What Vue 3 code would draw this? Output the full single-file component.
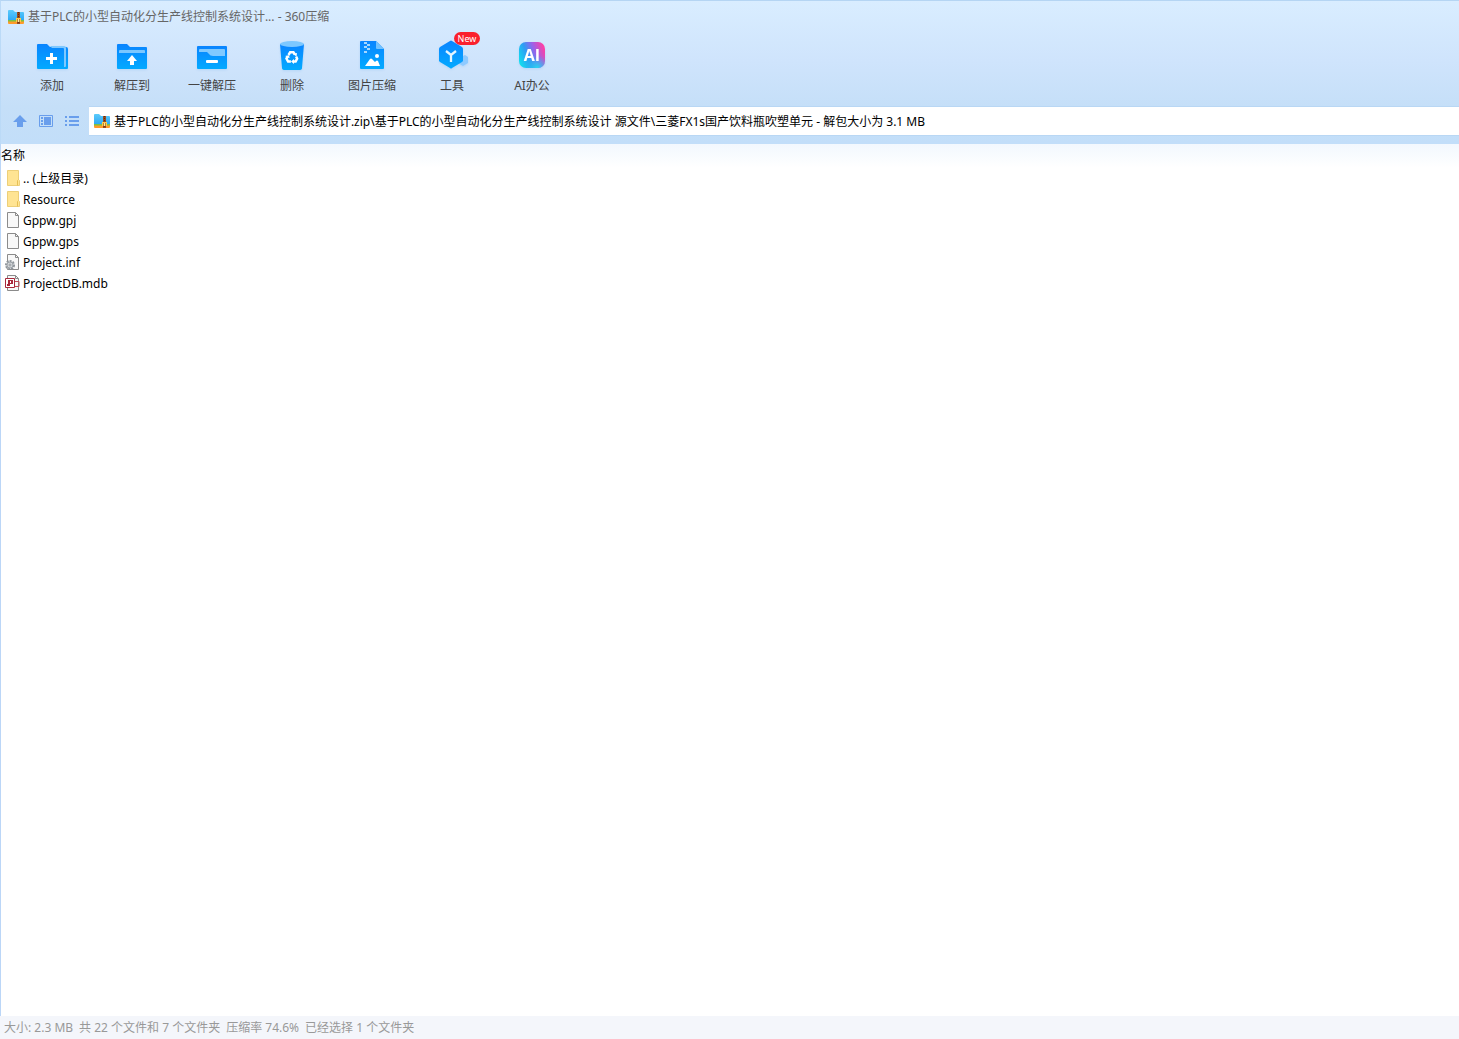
<script setup>
import { ref } from 'vue'

const path = ref('基于PLC的小型自动化分生产线控制系统设计.zip\\基于PLC的小型自动化分生产线控制系统设计 源文件\\三菱FX1s国产饮料瓶吹塑单元 - 解包大小为 3.1 MB')

const tools = [
  { id: 'add', label: '添加' },
  { id: 'extract', label: '解压到' },
  { id: 'quick', label: '一键解压' },
  { id: 'delete', label: '删除' },
  { id: 'image', label: '图片压缩' },
  { id: 'tools', label: '工具', badge: 'New' },
  { id: 'ai', label: 'AI办公' },
]

const files = [
  { name: '.. (上级目录)', type: 'folder' },
  { name: 'Resource', type: 'folder' },
  { name: 'Gppw.gpj', type: 'file' },
  { name: 'Gppw.gps', type: 'file' },
  { name: 'Project.inf', type: 'inf' },
  { name: 'ProjectDB.mdb', type: 'mdb' },
]

const summary = ['大小: 2.3 MB', '共 22 个文件和 7 个文件夹', '压缩率 74.6%', '已经选择 1 个文件夹']
</script>

<template>
  <div class="window">
    <svg class="defs" width="0" height="0" aria-hidden="true">
      <defs>
        <linearGradient id="blue" x1="0" y1="0" x2="0" y2="1">
          <stop offset="0" stop-color="#0a84ff" />
          <stop offset="1" stop-color="#03aaff" />
        </linearGradient>
        <linearGradient id="zipBlue" x1="0" y1="0" x2="0" y2="1">
          <stop offset="0" stop-color="#5ccbfb" />
          <stop offset="1" stop-color="#2aa6f4" />
        </linearGradient>
        <linearGradient id="aiBase" x1="0" y1="0.7" x2="1" y2="0.3">
          <stop offset="0" stop-color="#12dcee" />
          <stop offset="0.35" stop-color="#2f9cf4" />
          <stop offset="0.65" stop-color="#9a62ea" />
          <stop offset="1" stop-color="#ff3fa4" />
        </linearGradient>
        <radialGradient id="aiGlow" cx="0.7" cy="1" r="0.5">
          <stop offset="0" stop-color="#28d8f0" />
          <stop offset="1" stop-color="#28b8f0" stop-opacity="0" />
        </radialGradient>
        <symbol id="archive" viewBox="0 0 16 14">
          <path d="M0 1q0-1 1-1h4l2 2h8q1 0 1 1v8H0z" fill="url(#zipBlue)" />
          <path d="M0 10h16v2H0z" fill="#7cc142" />
          <path d="M0 11.500h16V13q0 1-1 1H1q-1 0-1-1z" fill="#ff9a2b" />
          <path d="M9 2h3v12H9z" fill="#984c20" />
          <path d="M10 2h1v1h-1zm0 2h1v1h-1zm0 2h1v1h-1z" fill="#5b2b13" />
          <path d="M8 8h5v4H8z" fill="#ffc94a" />
          <path d="M9.500 9h2v4h-2z" fill="#7a3b16" />
          <path d="M10 9h1v3h-1z" fill="#ffe8a0" />
        </symbol>
      </defs>
    </svg>

    <header class="chrome">
      <div class="titlebar">
        <svg class="archive" width="16" height="14" aria-hidden="true"><use href="#archive" /></svg>
        <h1>基于PLC的小型自动化分生产线控制系统设计... - 360压缩</h1>
      </div>

      <nav class="toolbar">
        <button v-for="tool in tools" :key="tool.id" type="button" class="tool">
          <svg class="tool-icon" width="36" height="36" viewBox="0 0 36 36" aria-hidden="true">
            <template v-if="tool.id === 'add'">
              <path d="M3 8q0-1 1-1h9l3 3h16q2 0 2 2v19q0 1-1 1H4q-1 0-1-1z" fill="url(#blue)" />
              <path d="M16 9h14q2 0 2 2v18q0 1-1 1h-1V12q0-1-1-1H18z" fill="#7ec8ff" />
              <path d="M16 16h3v4h4v3h-4v4h-3v-4h-4v-3h4z" fill="#fff" />
            </template>
            <template v-else-if="tool.id === 'extract'">
              <path d="M3 8q0-1 1-1h9l3 3h16q1 0 1 1v20q0 1-1 1H4q-1 0-1-1z" fill="url(#blue)" />
              <path d="M5 16v-2q0-1 1-1h24q1 0 1 1v2z" fill="#7bc7ff" />
              <path d="m18 18 5 6h-3v4h-4v-4h-3z" fill="#fff" />
            </template>
            <template v-else-if="tool.id === 'quick'">
              <rect x="3" y="9" width="30" height="23" rx="1" fill="url(#blue)" />
              <path d="M5 15v-2q0-1 1-1h24q1 0 1 1v6H19q-3 0-4-2l-2-2z" fill="#80c9ff" />
              <rect x="12" y="23" width="12" height="3" rx="1" fill="#fff" />
            </template>
            <template v-else-if="tool.id === 'delete'">
              <path d="M6 7h24l-2 24q0 2-3 2H11q-3 0-3-2z" fill="url(#blue)" />
              <ellipse cx="18" cy="7" rx="12" ry="3" fill="#7dc8ff" />
              <g fill="none" stroke="#fff" stroke-width="2.5">
                <path d="m14.5 18 1.7-2.8h3.2l1.5 2.3" />
                <path d="m22.1 19.4 1 2.2-1.5 3h-2.5" />
                <path d="M16.9 24.6h-2.8l-1.6-3 1.2-2.2" />
              </g>
              <path d="m19 17 4-1-.5 3.5zM20 22v5l-3-2.5zM11 19l4-.8.6 3z" fill="#fff" />
            </template>
            <template v-else-if="tool.id === 'image'">
              <path d="M6 5q0-1 1-1h15l8 8v19q0 1-1 1H7q-1 0-1-1z" fill="url(#blue)" />
              <path d="m22 4 8 8h-7q-1 0-1-1z" fill="#73c2ff" />
              <path d="M10 5h3v2h-3zm3 2h3v2h-3zm-3 2h3v2h-3zm3 2h3v2h-3zm-3 3h3v2h-3z" fill="#a5d7ff" />
              <path d="m11 29 5-7q1-1 2 0l3 3 1-1q1-1 2 0l2 5z" fill="#fff" />
              <circle cx="23" cy="19" r="2" fill="#fff" />
            </template>
            <template v-else-if="tool.id === 'tools'">
              <path d="M27 20l4-2 3 2v6l-5 3-5-3z" fill="#8ecaff" />
              <path d="M16 4q1-1 2 0l10 6q1 1 1 2v12l-1 1-10 6q-1 1-2 0L6 25l-1-1V12q0-1 1-2z" fill="url(#blue)" />
              <path d="m12 14 5 4 5-4m-5 4v7" fill="none" stroke="#e2f5ff" stroke-width="2.3" />
            </template>
            <template v-else>
              <rect x="5" y="5" width="26" height="26" rx="7" fill="url(#aiBase)" />
              <rect x="5" y="5" width="26" height="26" rx="7" fill="url(#aiGlow)" />
              <text x="18" y="24" text-anchor="middle" class="ai-text">AI</text>
            </template>
          </svg>
          <span>{{ tool.label }}</span>
          <span v-if="tool.badge" class="badge">{{ tool.badge }}</span>
        </button>
      </nav>

      <div class="address">
        <div class="nav-buttons">
          <button type="button" aria-label="上级目录">
            <svg width="14" height="14" viewBox="0 0 14 14"><path d="m7 1 7 7h-4v5H4V8H0z" fill="#699eec" /></svg>
          </button>
          <button type="button" aria-label="预览">
            <svg width="14" height="14" viewBox="0 0 14 14" fill="#699eec">
              <path d="M.5 1.5h13v11H.5z" fill="none" stroke="#699eec" />
              <path d="M5 3h7v8H5zM2 3h2v2H2zm0 3h2v2H2zm0 3h2v2H2z" />
            </svg>
          </button>
          <button type="button" aria-label="列表">
            <svg width="14" height="14" viewBox="0 0 14 14" fill="#699eec">
              <path d="M0 2h2v2H0zm4 0h10v2H4zM0 6h2v2H0zm4 0h10v2H4zm-4 4h2v2H0zm4 0h10v2H4z" />
            </svg>
          </button>
        </div>
        <label class="path-box">
          <svg class="archive" width="16" height="14" aria-hidden="true"><use href="#archive" /></svg>
          <input v-model="path" type="text" aria-label="路径" />
        </label>
      </div>
    </header>

    <main class="listing">
      <table>
        <thead>
          <tr><th scope="col">名称</th></tr>
        </thead>
        <tbody>
          <tr v-for="file in files" :key="file.name">
            <td>
              <div class="entry">
                <svg width="16" height="17" viewBox="0 0 16 17" aria-hidden="true">
                  <template v-if="file.type === 'folder'">
                    <path d="M2.5.5h11v9l1 1v5h-12z" fill="#ffe493" stroke="#edcf78" />
                    <path d="M12.500 15.500v-5l1-1" fill="none" stroke="#e6bf55" />
                  </template>
                  <template v-else>
                    <path d="M2.5.5h8l3 3v12h-11z" fill="#f8f8f8" stroke="#8b8b8b" />
                    <path d="M10.5.5v3h3" fill="none" stroke="#8b8b8b" />
                  </template>
                  <template v-if="file.type === 'inf'">
                    <circle cx="5" cy="11" r="4" fill="#eee" stroke="#8d9399" stroke-width="2" stroke-dasharray="2 1" />
                    <circle cx="5" cy="11" r="3" fill="#d5d8db" stroke="#9da3a9" />
                    <circle cx="5" cy="11" r="1" fill="#fff" stroke="#8d9399" />
                  </template>
                  <template v-if="file.type === 'mdb'">
                    <path d="M10 6.500h4v5h-4" fill="none" stroke="#bd4a56" />
                    <path d="M.5 3.500h9v9h-9z" fill="#fff" stroke="#a9283c" />
                    <path d="M3 5h5v4H5v2H2V9h1zm2 1v2h1V6z" fill="#a9283c" fill-rule="evenodd" />
                  </template>
                </svg>
                <span>{{ file.name }}</span>
              </div>
            </td>
          </tr>
        </tbody>
      </table>
    </main>

    <footer class="status">
      <span v-for="item in summary" :key="item">{{ item }}</span>
    </footer>
  </div>
</template>

<style>
body {
  margin: 0;
}
</style>

<style scoped>
.window {
  display: flex;
  flex-direction: column;
  min-height: 100vh;
  background: #fff;
  color: #000;
  font: 12px/16px "Noto Sans", "Noto Sans CJK SC", sans-serif;
}
.defs {
  position: absolute;
}
.chrome {
  box-sizing: border-box;
  border-top: 1px solid #b5d5f3;
  border-left: 1px solid #bbdaf7;
  background: linear-gradient(#d9edff, #cfe4fc 60px, #c5dff8 106px, #c2def9);
}
.titlebar {
  display: flex;
  align-items: center;
  gap: 4px;
  height: 31px;
  padding-left: 7px;
}
h1 {
  margin: 0;
  color: #666;
  font-size: 12px;
  font-weight: 400;
  white-space: nowrap;
}
.archive {
  flex: none;
}
.toolbar {
  display: flex;
  height: 74px;
  padding-left: 11px;
}
button {
  border: 0;
  background: none;
  color: inherit;
  font: inherit;
}
.tool {
  position: relative;
  display: flex;
  flex-direction: column;
  align-items: center;
  width: 80px;
  padding: 5px 0 0;
  gap: 5px;
  color: #444;
}
.tool-icon {
  display: block;
  filter: drop-shadow(0 1px 1px #7fb8f050);
}
.ai-text {
  fill: #fff;
  font: 700 16px "Open Sans", sans-serif;
}
.badge {
  position: absolute;
  top: 0;
  left: 42px;
  width: 26px;
  height: 13px;
  border-radius: 7px;
  background: #fa202d;
  color: #fff;
  font-size: 9px;
  line-height: 13px;
}
.address {
  display: flex;
  height: 30px;
  padding-bottom: 8px;
}
.nav-buttons {
  display: flex;
  align-items: center;
  gap: 12px;
  width: 76px;
  padding-left: 12px;
}
.nav-buttons button {
  padding: 0;
  height: 14px;
}
.nav-buttons svg {
  display: block;
}
.path-box {
  display: flex;
  flex: 1;
  align-items: center;
  gap: 4px;
  padding-left: 5px;
  border: 1px solid #b9d7f4;
  border-width: 1px 0;
  background: #fff;
}
input {
  flex: 1;
  min-width: 0;
  padding: 2px 0 0;
  border: 0;
  outline: 0;
  background: none;
  color: #000;
  font: inherit;
}
.listing {
  flex: 1;
  border-left: 1px solid #bbd6f7;
}
table {
  width: 100%;
  border-collapse: collapse;
}
th {
  height: 24px;
  padding: 0;
  background: linear-gradient(#f2f8fe, #fff);
  font-weight: 400;
  text-align: left;
}
td {
  height: 21px;
  padding: 0 0 0 4px;
}
.entry {
  display: flex;
  align-items: center;
  gap: 2px;
}
.status {
  display: flex;
  gap: 6px;
  height: 23px;
  padding-left: 4px;
  background: #f4f6fb;
  color: #999;
  line-height: 23px;
}
</style>
